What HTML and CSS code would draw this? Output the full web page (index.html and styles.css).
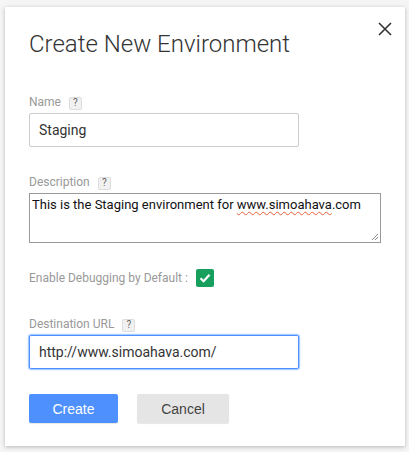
FILE: index.html
```html
<!DOCTYPE html>
<html>
<head>
<meta charset="utf-8">
<link rel="stylesheet" href="styles.css">
</head>
<body>
<div class="dialog">
  <button class="close" aria-label="Close">
    <svg width="14" height="14" viewBox="0 0 14 14"><path d="M1 1L13 13M13 1L1 13" stroke="#333" stroke-width="1.6" fill="none"/></svg>
  </button>
  <h1 class="title">Create New Environment</h1>

  <div class="field">
    <div class="label">Name <span class="help">?</span></div>
    <div class="input">Staging</div>
  </div>

  <div class="field field-desc">
    <div class="label">Description <span class="help">?</span></div>
    <div class="textarea"><span class="ta-text">This is the Staging environment for <span class="spell">www.simoahava</span>.com</span>
      <svg class="grip" width="8" height="8" viewBox="0 0 8 8"><path d="M7 1L1 7M7 4L4 7" stroke="#888" stroke-width="1"/></svg>
    </div>
  </div>

  <div class="check-row">
    <span class="label-inline">Enable Debugging by Default :</span>
    <span class="checkbox"><svg width="14" height="14" viewBox="0 0 14 14"><path d="M2.5 7.2L5.6 10.2L11.5 3.8" stroke="#fff" stroke-width="2.2" fill="none"/></svg></span>
  </div>

  <div class="field field-url">
    <div class="label">Destination URL <span class="help">?</span></div>
    <div class="input focused">http://www.simoahava.com/</div>
  </div>

  <div class="actions">
    <button class="btn btn-primary">Create</button>
    <button class="btn btn-default">Cancel</button>
  </div>
</div>
</body>
</html>
```

FILE: styles.css
```css
html, body {
  margin: 0;
  padding: 0;
}
body {
  background: #f5f5f5;
  font-family: Roboto, "Liberation Sans", Arial, sans-serif;
  width: 409px;
  height: 452px;
  overflow: hidden;
}
.dialog {
  position: relative;
  box-sizing: border-box;
  margin: 7px 0 0 5px;
  width: 400px;
  height: 439px;
  background: #fff;
  box-shadow: 0 1px 4px rgba(0,0,0,0.25);
  padding: 21px 24px 0 24px;
}
.close {
  position: absolute;
  top: 15px;
  right: 13px;
  border: 0;
  background: none;
  padding: 0;
  width: 14px;
  height: 14px;
  display: flex;
}
.title {
  margin: 0;
  font-weight: 300;
  font-size: 24px;
  line-height: 32px;
  color: #333;
}
.field {
  margin-top: 34px;
}
.field-desc { margin-top: 27px; }
.field-url { margin-top: 29px; }
.label, .label-inline {
  font-size: 12px;
  color: #999;
  line-height: 16px;
  display: flex;
  align-items: center;
}
.help {
  display: inline-flex;
  align-items: center;
  justify-content: center;
  box-sizing: border-box;
  width: 13px;
  height: 13px;
  margin-left: 8px;
  margin-top: 2px;
  background: #f1f1f1;
  border: 1px solid #ddd;
  border-radius: 2px;
  font-size: 10px;
  color: #666;
}
.input {
  box-sizing: border-box;
  margin-top: 3px;
  width: 270px;
  height: 34px;
  border: 1px solid #ccc;
  border-radius: 2px;
  padding: 0 9px;
  display: flex;
  align-items: center;
  font-size: 14px;
  color: #333;
}
.input.focused {
  border-color: #4d90fe;
  box-shadow: 0 0 0 1px rgba(77,144,254,0.35), 0 0 3px rgba(77,144,254,0.6);
  padding-left: 9px;
}
.textarea {
  position: relative;
  box-sizing: border-box;
  margin-top: 3px;
  width: 352px;
  height: 50px;
  border: 1px solid #999;
  padding: 2px 2px;
  font-size: 13px;
  line-height: 17px;
  color: #111;
  white-space: nowrap;
}
.spell {
  text-decoration: underline wavy #e8603a;
  text-decoration-thickness: 1px;
  text-underline-offset: 2px;
}
.grip {
  position: absolute;
  right: 1px;
  bottom: 1px;
}
.check-row {
  margin-top: 26px;
  display: flex;
  align-items: center;
}
.checkbox {
  margin-left: 8px;
  width: 18px;
  height: 18px;
  border-radius: 2px;
  background: #17a05d;
  display: flex;
  align-items: center;
  justify-content: center;
}
.actions {
  margin-top: 25px;
  display: flex;
  gap: 19px;
}
.btn {
  border: 0;
  border-radius: 2px;
  height: 29px;
  font-family: "Liberation Sans", Arial, sans-serif;
  font-size: 14px;
  padding: 0;
}
.btn-primary {
  width: 89px;
  background: #4d90fe;
  color: #fff;
  box-shadow: 0 1px 1px rgba(0,0,0,0.1);
}
.btn-default {
  width: 92px;
  background: #e5e5e5;
  color: #444;
  box-shadow: 0 1px 1px rgba(0,0,0,0.1);
}
```
